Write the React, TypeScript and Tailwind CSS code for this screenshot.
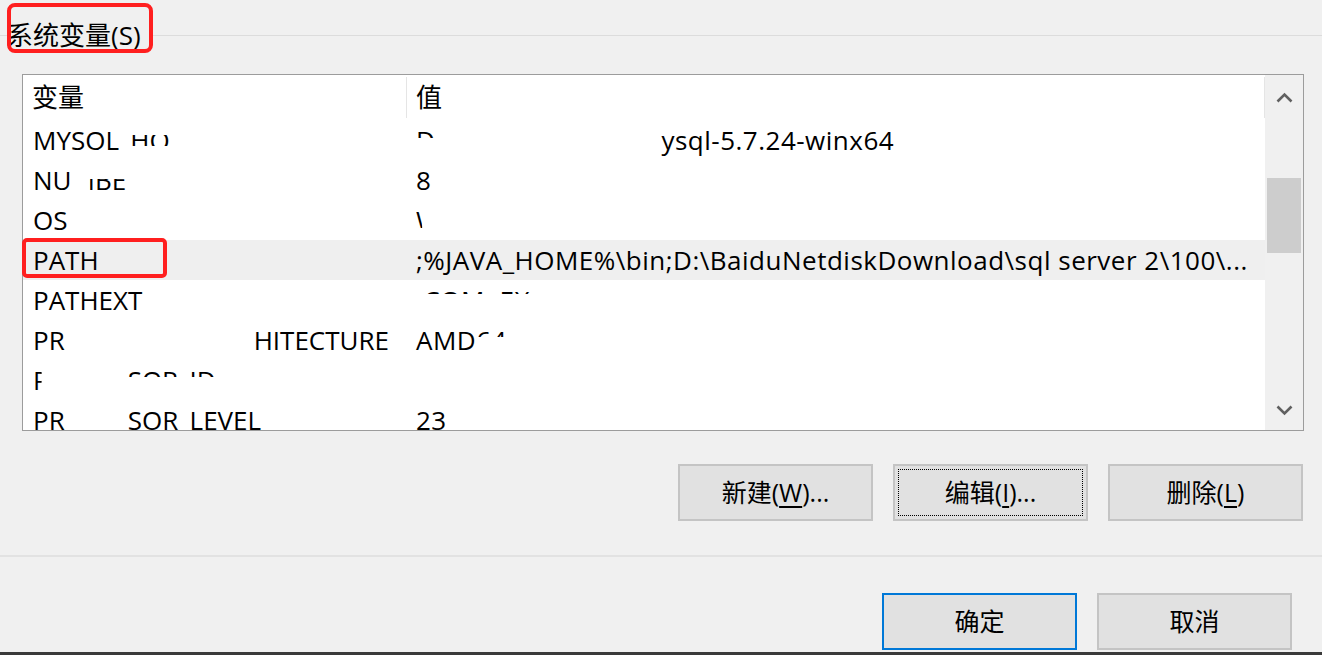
import clsx from 'clsx';
import type { ReactNode } from 'react';

function Row({ selected, name, value }: { selected?: boolean; name: ReactNode; value?: ReactNode }) {
  return (
    <div className={clsx('flex h-[40px] shrink-0 leading-[40px] whitespace-nowrap', selected && 'bg-[#efefef]')}>
      <div className="flex w-[384px] shrink-0 pl-[10px]">{name}</div>
      <div className="flex min-w-0 flex-1 overflow-hidden pl-[9px] tracking-[0.5px]">{value}</div>
    </div>
  );
}

function Chevron({ down }: { down?: boolean }) {
  return (
    <svg width="17" height="11" viewBox="0 0 17 11" className={clsx(down && 'rotate-180')}>
      <polyline points="1.5,9.5 8.5,2.5 15.5,9.5" fill="none" stroke="#606060" strokeWidth="2.6" />
    </svg>
  );
}

function Button({ children, focused, primary }: { children: ReactNode; focused?: boolean; primary?: boolean }) {
  return (
    <button
      className={clsx(
        'relative flex h-[57px] w-[195px] items-center justify-center bg-[#e1e1e1] text-[25px] text-black',
        primary ? 'border-2 border-[#0078d7]' : 'border-2 border-[#c4c4c4]'
      )}
    >
      {focused && <span className="absolute inset-[3px] border border-dotted border-black" />}
      {children}
    </button>
  );
}

export default function App() {
  return (
    <div className="relative flex h-[655px] w-[1322px] flex-col overflow-hidden bg-[#f0f0f0] font-['Open_Sans','Noto_Sans_CJK_SC',sans-serif] text-black">
      {/* group box title */}
      <div className="flex h-[74px] items-start pt-[18px]">
        <div className="flex h-[34px] w-full items-center">
          <div className="h-[1px] w-[7px] bg-[#dcdcdc]" />
          <span className="text-[26px] leading-[34px]">系统变量(S)</span>
          <div className="ml-[10px] h-[1px] flex-1 bg-[#dcdcdc]" />
        </div>
      </div>
      <div className="absolute left-[7px] top-[3px] h-[50px] w-[146px] rounded-[8px] border-4 border-[#ff1f1f]" />

      {/* list view */}
      <div className="relative ml-[22px] flex h-[357px] w-[1282px] border border-[#9c9c9c] bg-white text-[26px]">
        <div className="flex min-w-0 flex-1 flex-col overflow-hidden">
          <div className="flex h-[45px] shrink-0 items-center">
            <div className="w-[383px] pl-[9px] leading-[45px]">变量</div>
            <div className="h-[41px] w-[1px] bg-[#e5e5e5]" />
            <div className="flex-1 pl-[9px] leading-[45px]">值</div>
            <div className="h-[41px] w-[1px] bg-[#e5e5e5]" />
          </div>
          <Row
            name={
              <>
                <span className="[clip-path:inset(0_0_10px_0)]">MYSQL</span>
                <span className="[clip-path:inset(15px_0_14px_0)]">_HO</span>
              </>
            }
            value={
              <>
                <span className="[clip-path:inset(0_0_22px_0)]">D</span>
                <span className="ml-[226px]">ysql-5.7.24-winx64</span>
              </>
            }
          />
          <Row
            name={
              <>
                <span>NU</span>
                <span className="[clip-path:inset(19px_0_0_18px)]">MBE</span>
              </>
            }
            value={<span>8</span>}
          />
          <Row name={<span>OS</span>} value={<span className="[clip-path:inset(8px_75%_12px_0)]">W</span>} />
          <Row selected name={<span>PATH</span>} value={<span>;%JAVA_HOME%\bin;D:\BaiduNetdiskDownload\sql server 2\100\...</span>} />
          <Row
            name={<span>PATHEXT</span>}
            value={<span className="[clip-path:inset(0_0_26px_0)]">.COM;.EX</span>}
          />
          <Row
            name={
              <>
                <span>PR</span>
                <span className="ml-auto mr-[18px]">HITECTURE</span>
              </>
            }
            value={
              <>
                <span>AMD</span>
                <span className="[clip-path:inset(0_0_23px_0)]">64</span>
              </>
            }
          />
          <Row
            name={
              <>
                <span className="[clip-path:inset(0_45%_0_0)]">P</span>
                <span className="ml-[79px] [clip-path:inset(0_0_23px_0)]">SOR_ID</span>
              </>
            }
          />
          <Row
            name={
              <>
                <span>PR</span>
                <span className="ml-[63px]">SOR_LEVEL</span>
              </>
            }
            value={<span>23</span>}
          />
        </div>

        {/* scrollbar */}
        <div className="flex w-[38px] shrink-0 flex-col bg-[#f0f0f0]">
          <div className="flex h-[44px] items-center justify-center">
            <Chevron />
          </div>
          <div className="flex-1">
            <div className="mx-[2px] mt-[59px] h-[75px] bg-[#cdcdcd]" />
          </div>
          <div className="flex h-[40px] items-center justify-center">
            <Chevron down />
          </div>
        </div>

        <div className="absolute left-[-1px] top-[163px] h-[40px] w-[145px] rounded-[5px] border-4 border-[#ff1f1f]" />
      </div>

      {/* action buttons */}
      <div className="mt-[33px] flex justify-end gap-[20px] pr-[19px]">
        <Button>
          新建(<span className="underline underline-offset-4">W</span>)...
        </Button>
        <Button focused>
          编辑(<span className="underline underline-offset-4">I</span>)...
        </Button>
        <Button>
          删除(<span className="underline underline-offset-4">L</span>)
        </Button>
      </div>

      <div className="mt-[34px] h-[2px] bg-[#e2e2e2]" />

      <div className="mt-[36px] flex justify-end gap-[20px] pr-[30px]">
        <Button primary>确定</Button>
        <Button>取消</Button>
      </div>

      <div className="mt-auto h-[3px] bg-[#3a3a3a]" />
    </div>
  );
}
